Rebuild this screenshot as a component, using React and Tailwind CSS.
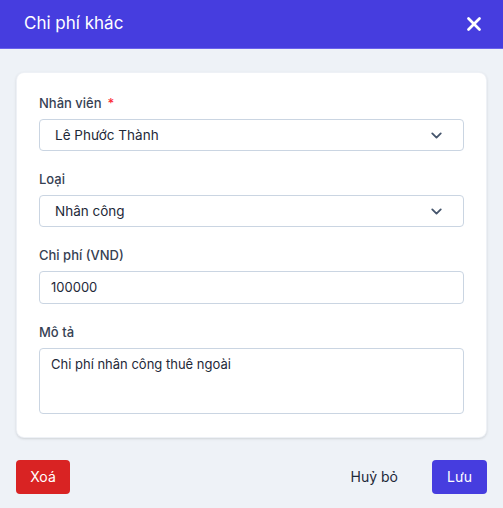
import React from 'react';
import { ChevronDown, X } from 'lucide-react';

const Field = ({ label, required, children }) => (
  <div>
    <label className="flex items-center h-5 mb-[5px] text-[13px] font-medium text-gray-700">
      {label}
      {required && <span className="ml-1.5 text-red-500">*</span>}
    </label>
    {children}
  </div>
);

const SelectBox = ({ value }) => (
  <div className="flex items-center justify-between h-8 pl-[15px] pr-[18px] bg-white border border-slate-300 rounded text-[13.5px] text-gray-800">
    <span>{value}</span>
    <ChevronDown size={17} strokeWidth={2.6} className="text-slate-600" />
  </div>
);

export default function App() {
  return (
    <div className="w-[503px] h-[508px] flex flex-col bg-[#eef2f7]" style={{ fontFamily: 'Inter, "Noto Sans", sans-serif' }}>
      {/* Header */}
      <div className="flex items-center justify-between h-[49px] px-6 bg-[#463ddf] border-b border-[#6a62ec]">
        <h2 className="text-[17px] text-white">Chi phí khác</h2>
        <X size={22} strokeWidth={3} className="text-white -mr-[6px]" />
      </div>

      {/* Body */}
      <div className="px-4 pt-[23px]">
        <div className="bg-white rounded-lg shadow-sm border border-slate-200/60 px-[22px] pt-[21px] pb-[23px] flex flex-col gap-[19px]">
          <Field label="Nhân viên" required>
            <SelectBox value="Lê Phước Thành" />
          </Field>
          <Field label="Loại">
            <SelectBox value="Nhân công" />
          </Field>
          <Field label="Chi phí (VND)">
            <div className="flex items-center h-[33px] px-[11px] bg-white border border-slate-300 rounded text-[13px] text-gray-800">
              100000
            </div>
          </Field>
          <Field label="Mô tả">
            <div className="h-[66px] px-[11px] pt-[6px] bg-white border border-slate-300 rounded text-[13px] text-gray-800">
              Chi phí nhân công thuê ngoài
            </div>
          </Field>
        </div>
      </div>

      {/* Footer */}
      <div className="flex items-center justify-between px-4 mt-[22px]">
        <button className="h-[34px] w-[54px] rounded bg-[#d92323] text-white text-sm">Xoá</button>
        <div className="flex items-center gap-[34px]">
          <button className="text-sm text-gray-800">Huỷ bỏ</button>
          <button className="h-[34px] w-[55px] rounded bg-[#463ddf] text-white text-sm">Lưu</button>
        </div>
      </div>
    </div>
  );
}
